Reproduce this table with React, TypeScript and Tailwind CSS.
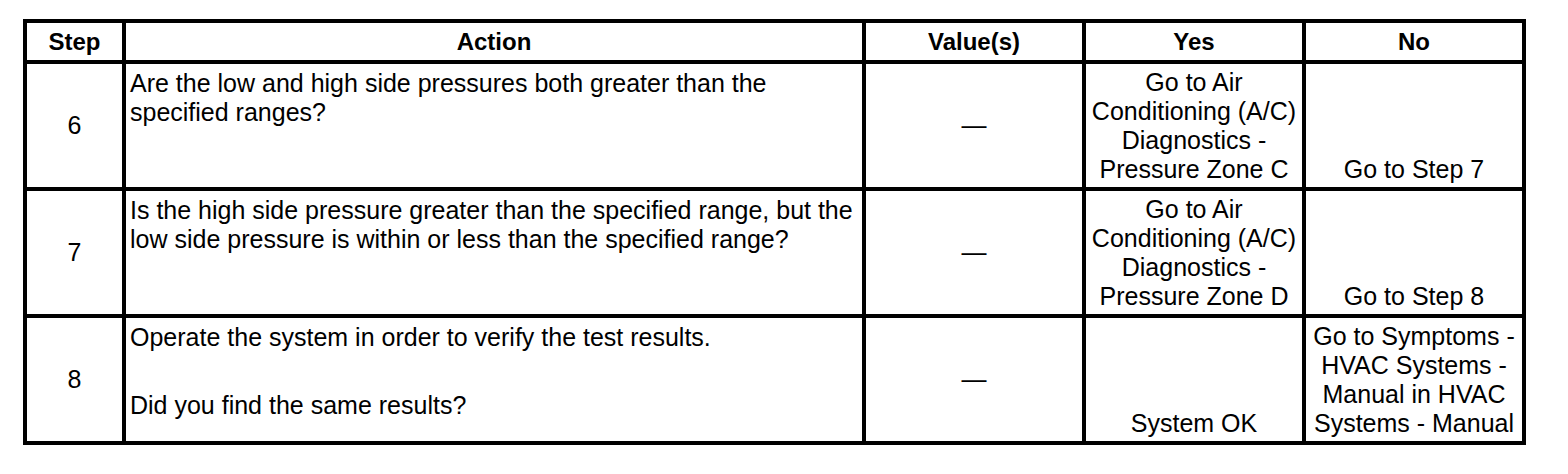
import React from 'react'

type Row = {
  step: string
  action: string[]
  yes: string[]
  no: string[]
}

const rows: Row[] = [
  {
    step: '6',
    action: ['Are the low and high side pressures both greater than the specified ranges?'],
    yes: ['Go to Air', 'Conditioning (A/C)', 'Diagnostics -', 'Pressure Zone C'],
    no: ['Go to Step 7'],
  },
  {
    step: '7',
    action: ['Is the high side pressure greater than the specified range, but the low side pressure is within or less than the specified range?'],
    yes: ['Go to Air', 'Conditioning (A/C)', 'Diagnostics -', 'Pressure Zone D'],
    no: ['Go to Step 8'],
  },
  {
    step: '8',
    action: ['Operate the system in order to verify the test results.', 'Did you find the same results?'],
    yes: ['System OK'],
    no: ['Go to Symptoms -', 'HVAC Systems -', 'Manual in HVAC', 'Systems - Manual'],
  },
]

function App() {
  return (
    <div className="min-h-screen bg-white pl-[23px] pt-[19px] font-['Liberation_Sans',Arial,sans-serif] text-black">
      <table className="table-fixed border-collapse border-4 border-black text-[25px] leading-[29px] w-[1503px]">
        <colgroup>
          <col className="w-[99px]" />
          <col className="w-[740px]" />
          <col className="w-[220px]" />
          <col className="w-[220px]" />
          <col className="w-[220px]" />
        </colgroup>
        <thead>
          <tr className="h-[41px]">
            {['Step', 'Action', 'Value(s)', 'Yes', 'No'].map(h => (
              <th key={h} className="border-4 border-black p-0 text-center align-middle text-[24px] font-bold">{h}</th>
            ))}
          </tr>
        </thead>
        <tbody>
          {rows.map(row => (
            <tr key={row.step} className="h-[127px]">
              <td className="border-4 border-black p-0 text-center align-middle">{row.step}</td>
              <td className="border-4 border-black pl-[4px] pr-[2px] pt-[5px] align-top">
                {row.action.map((line, i) => (
                  <p key={i} className={i > 0 ? 'mt-[39px]' : ''}>{line}</p>
                ))}
              </td>
              <td className="border-4 border-black p-0 text-center align-middle">—</td>
              <td className="border-4 border-black px-[2px] pb-[3px] text-center align-bottom">
                {row.yes.map((line, i) => (
                  <div key={i} className="whitespace-nowrap">{line}</div>
                ))}
              </td>
              <td className="border-4 border-black px-[2px] pb-[3px] text-center align-bottom">
                {row.no.map((line, i) => (
                  <div key={i} className="whitespace-nowrap">{line}</div>
                ))}
              </td>
            </tr>
          ))}
        </tbody>
      </table>
    </div>
  )
}

export default App
